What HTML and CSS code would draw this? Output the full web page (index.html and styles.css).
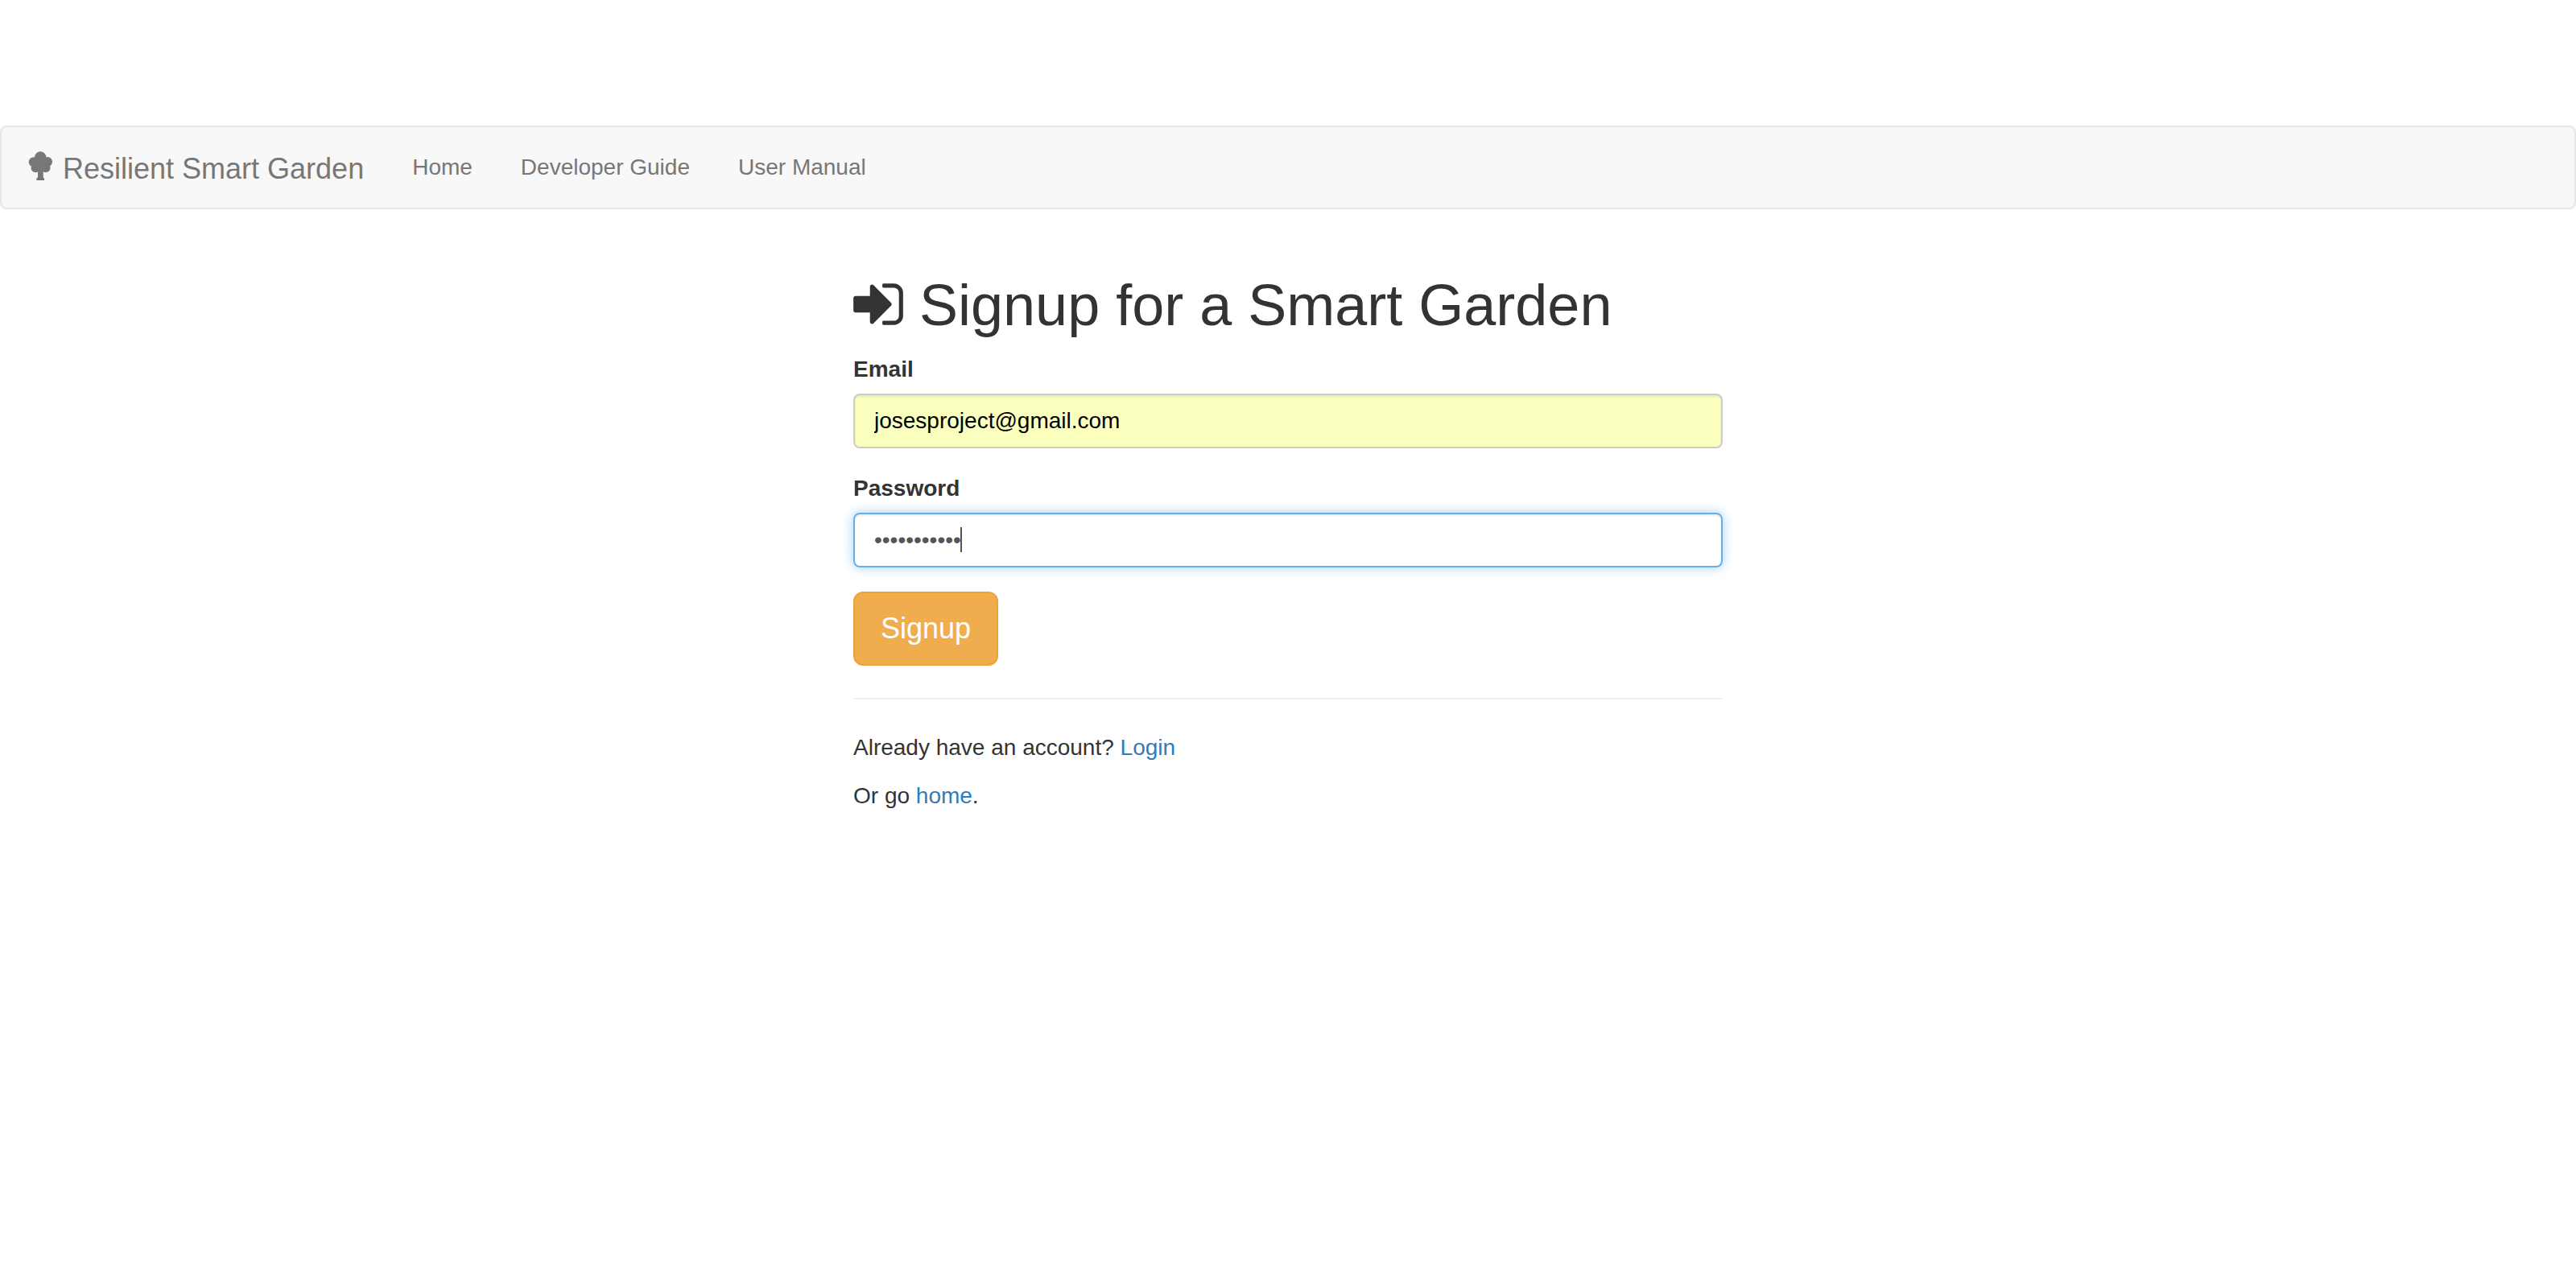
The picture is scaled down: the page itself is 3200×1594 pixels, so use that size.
FILE: index.html
```
<!DOCTYPE html>
<html lang="en">
<head>
  <meta charset="utf-8">
  <title>Resilient Smart Garden</title>
  <link rel="stylesheet" href="styles.css">
</head>
<body>
  <nav class="navbar">
    <a class="navbar-brand" href="#">
      <svg class="icon-tree" viewBox="0 0 36 36" aria-hidden="true">
        <circle cx="18.200" cy="7.500" r="7.200"/>
        <circle cx="9.700" cy="13.200" r="6"/>
        <circle cx="27" cy="12.900" r="6"/>
        <circle cx="12.300" cy="20.400" r="5.800"/>
        <circle cx="24.700" cy="20.400" r="5.800"/>
        <path d="M11 9H26V23L21.700 25V32L23 34V36H13.300V34L15 32V25L11 23Z"/>
      </svg>
      Resilient Smart Garden
    </a>
    <ul class="navbar-nav">
      <li><a href="#">Home</a></li>
      <li><a href="#">Developer Guide</a></li>
      <li><a href="#">User Manual</a></li>
    </ul>
  </nav>

  <main class="signup">
    <h1>
      <svg class="icon-sign-in" viewBox="0 0 1536 1792" aria-hidden="true">
        <path d="M1184 896q0 26-19 45l-544 544q-19 19-45 19t-45-19-19-45v-288h-448q-26 0-45-19t-19-45v-384q0-26 19-45t45-19h448v-288q0-26 19-45t45-19 45 19l544 544q19 19 19 45zm352-352v704q0 119-84.500 203.500t-203.500 84.500h-320q-13 0-22.500-9.500t-9.500-22.500q0-4-1-20t-.5-26.500 3-23.500 10-19.500 20.500-6.500h320q66 0 113-47t47-113v-704q0-66-47-113t-113-47h-312l-11.500-1-11.500-3-8-5.500-7-9-2-13.500q0-4-1-20t-.5-26.500 3-23.500 10-19.500 20.500-6.500h320q119 0 203.500 84.500t84.500 203.500z"/>
      </svg>
      Signup for a Smart Garden
    </h1>

    <form>
      <div class="form-group">
        <label for="email">Email</label>
        <input class="form-control autofilled" id="email" type="email" name="email" value="josesproject@gmail.com">
      </div>
      <div class="form-group">
        <label for="password">Password</label>
        <div class="field">
          <input class="form-control focused" id="password" type="password" name="password" value="smartgarden">
          <span class="caret"></span>
        </div>
      </div>
      <button class="btn" type="submit">Signup</button>
    </form>

    <hr>

    <p>Already have an account? <a href="#">Login</a></p>
    <p>Or go <a href="#">home</a>.</p>
  </main>
</body>
</html>
```
FILE: styles.css
```
*,
*::before,
*::after {
  box-sizing: border-box;
}

body {
  margin: 0;
  padding-top: 156px;
  background: #fff;
  color: #333;
  font-family: "Liberation Sans", Arial, sans-serif;
  font-size: 28px;
  line-height: 40px;
}

a {
  color: #337ab7;
  text-decoration: none;
}

.navbar {
  display: flex;
  min-height: 104px;
  margin-bottom: 40px;
  border: 2px solid #e7e7e7;
  border-radius: 8px;
  background: #f8f8f8;
}

.navbar a {
  display: block;
  padding: 30px;
  color: #777;
}

.navbar .navbar-brand {
  padding-bottom: 20px;
  font-size: 36px;
}

.navbar-nav {
  display: flex;
  margin: 0;
  padding: 0;
  list-style: none;
}

.icon-tree {
  width: 36px;
  height: 36px;
  vertical-align: -2px;
  fill: currentColor;
}

.signup {
  width: 100%;
  max-width: 1080px;
  margin: 0 auto;
  padding-top: 40px;
}

h1 {
  margin: 0 0 20px;
  font-size: 72px;
  font-weight: 500;
  line-height: 79px;
}

.icon-sign-in {
  width: 62px;
  height: 72px;
  vertical-align: -10px;
  fill: currentColor;
}

.form-group {
  margin-bottom: 30px;
}

label {
  display: block;
  margin-bottom: 10px;
  font-weight: 700;
}

.field {
  position: relative;
}

.form-control {
  display: block;
  width: 100%;
  height: 68px;
  padding: 12px 24px;
  border: 2px solid #ccc;
  border-radius: 8px;
  outline: 0;
  background: #fff;
  box-shadow: inset 0 2px 2px rgba(0, 0, 0, 0.075);
  color: #555;
  font: inherit;
}

.autofilled {
  background: #faffbd;
  color: #000;
}

.focused {
  border-color: #66afe9;
  box-shadow: inset 0 2px 2px rgba(0, 0, 0, 0.075), 0 0 14px rgba(102, 175, 233, 0.6);
}

.caret {
  position: absolute;
  top: 18px;
  left: 133px;
  width: 2px;
  height: 31px;
  background: #555;
}

.btn {
  display: block;
  padding: 20px 32px;
  border: 2px solid #eea236;
  border-radius: 12px;
  background: #f0ad4e;
  color: #fff;
  font: inherit;
  font-size: 36px;
  line-height: 48px;
  cursor: pointer;
}

hr {
  margin: 40px 0;
  border: 0;
  border-top: 2px solid #eee;
}

p {
  margin: 0 0 20px;
}
```
